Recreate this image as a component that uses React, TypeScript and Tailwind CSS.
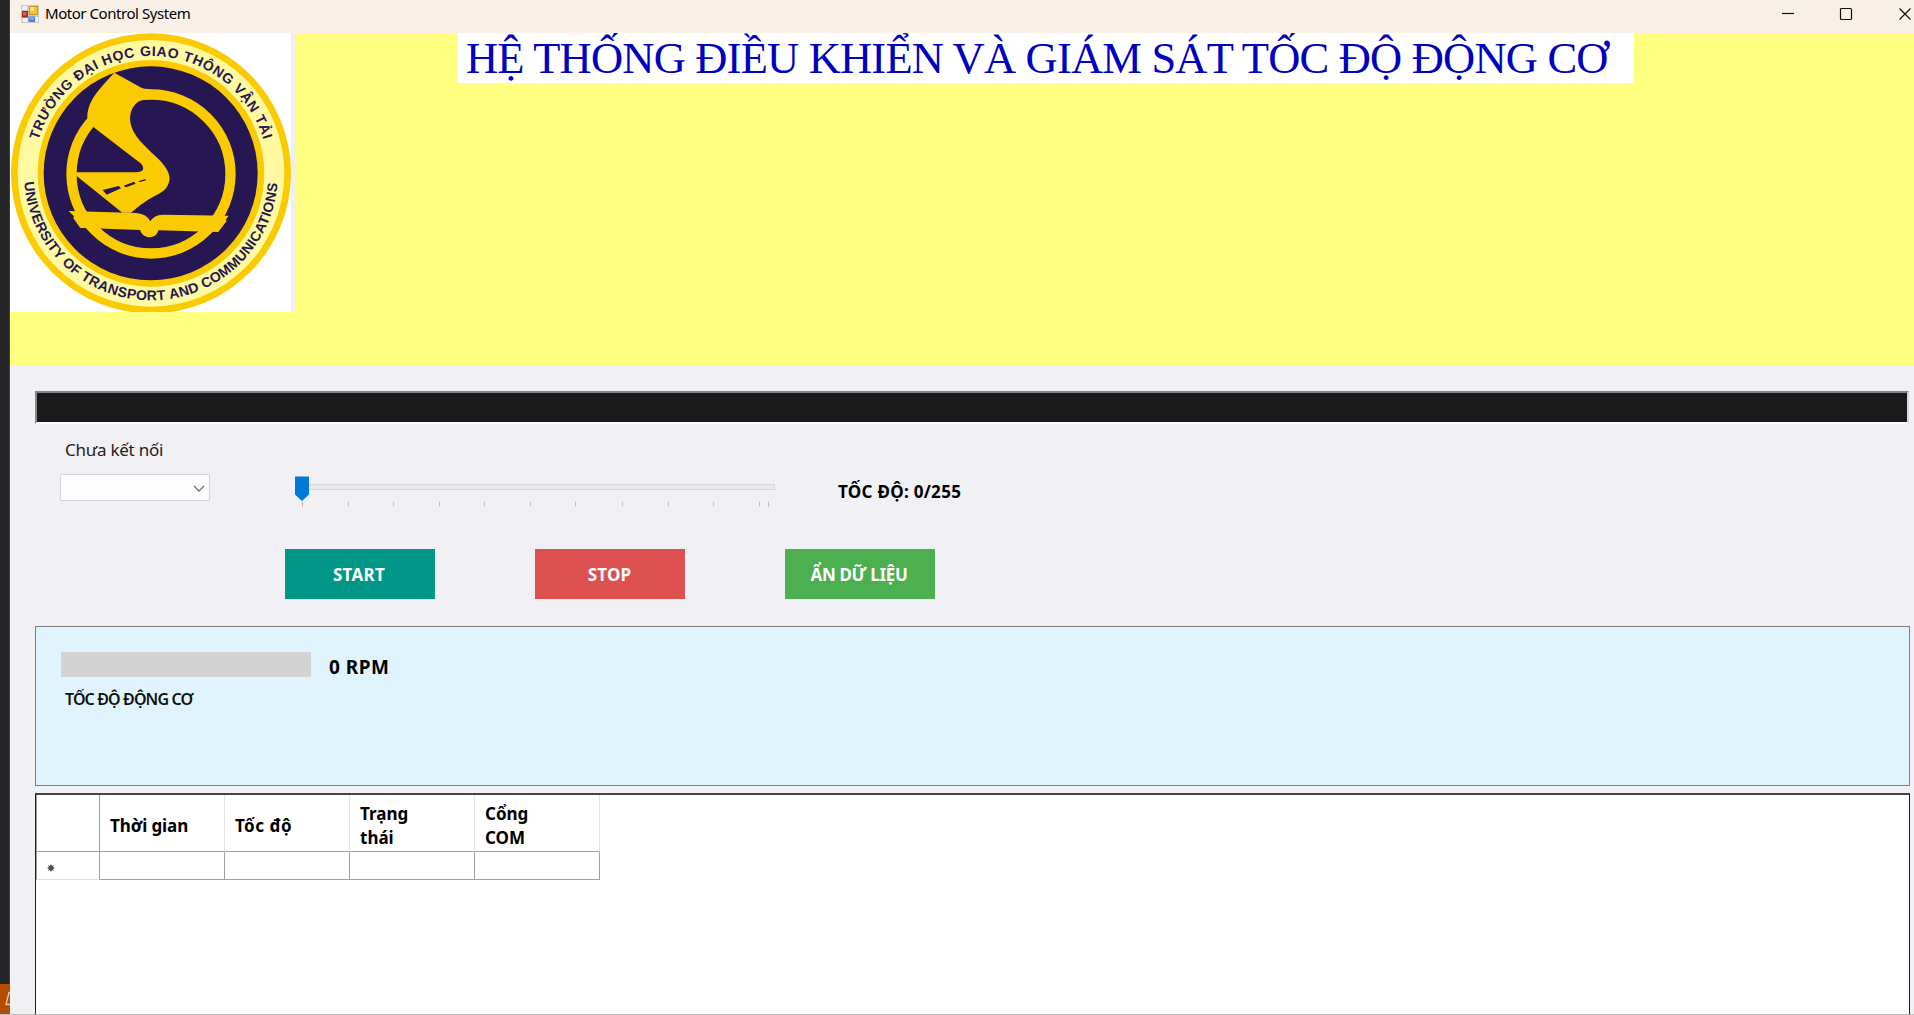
import React from "react";

function Logo() {
  return (
    <svg className="h-[279px] w-[281px] shrink-0 bg-white" viewBox="30 99 843 837">
      <circle cx="453" cy="520" r="420" fill="#fbcb02" />
      <circle cx="453" cy="520" r="400" fill="#fffaa2" />
      <circle cx="453" cy="520" r="340" fill="#fbcb02" />
      <circle cx="452" cy="520" r="321" fill="#261652" />
      <circle cx="453" cy="522" r="238.500" fill="none" stroke="#fbcb02" strokeWidth="31" />
      <path
        d="M343 218 L424 263 Q434 268 450 267 L452 298 L430 299 C405 304 386 332 391 366 C397 408 435 438 470 472 C505 505 513 530 507 547 C499 576 474 582 448 597 Q420 614 393 638 L367 638 L229 527 L229 517 L408 517 C430 517 436 505 422 490 L400 473 L280 381 L262 353 C262 305 292 272 343 218Z"
        fill="#fbcb02"
      />
      <path
        d="M308 570 L356 558 L363 565 L320 584Z M371 557 L402 545 L407 551 L378 562Z M415 544 L436 537 L438 541 L420 546Z"
        fill="#261652"
      />
      <path
        d="M206 633 L410 639 Q440 642 451 664 Q462 645 488 644 L686 647 L677 660 L680 663 L655 696 L475 691 C470 718 430 720 420 690 L260 684 L241 684 L220 655 L222 649Z"
        fill="#fbcb02"
      />
      <path id="arc-top" d="M101 520 A352 352 0 0 1 805 520" fill="none" />
      <path id="arc-bottom" d="M72 520 A381 381 0 0 0 834 520" fill="none" />
      <g fontFamily="Liberation Sans, sans-serif" fontWeight="700" fontSize="42" fill="#261652">
        <text letterSpacing="1.9">
          <textPath href="#arc-top" startOffset="101">TRƯỜNG ĐẠI HỌC GIAO THÔNG VẬN TẢI</textPath>
        </text>
        <text letterSpacing="1">
          <textPath href="#arc-bottom" startOffset="26">UNIVERSITY OF TRANSPORT AND COMMUNICATIONS</textPath>
        </text>
      </g>
    </svg>
  );
}

function AppIcon() {
  return (
    <svg className="h-[18px] w-[18px]" viewBox="0 0 18 18">
      <rect width="18" height="18" fill="#cbcac8" />
      <rect x="1.500" y="1" width="4.500" height="4" fill="#f3f2ef" />
      <rect x="1.500" y="13" width="5" height="4" fill="#f3f2ef" />
      <rect x="14.500" y="12" width="2.500" height="5" fill="#f3f2ef" />
      <rect x="8" y="1" width="9" height="9" fill="#c99a1d" />
      <rect x="9" y="2" width="7" height="7" fill="#f5c62c" />
      <rect x="9" y="2" width="4" height="4" fill="#fbe07b" />
      <rect x="1" y="6" width="6" height="6.500" fill="#a92318" />
      <rect x="2" y="7" width="3.500" height="3.500" fill="#d4675b" />
      <rect x="7.500" y="11.500" width="6.500" height="5.500" fill="#4a7fe0" />
      <rect x="8.500" y="12.500" width="4.500" height="2" fill="#8ab8fa" />
    </svg>
  );
}

function TitleBar() {
  return (
    <header className="flex h-[33px] items-center justify-between rounded-tl-sm bg-[#f9f1e7] pl-[11px] pr-[2px]">
      <div className="flex items-start gap-[6px] pb-[6px]">
        <AppIcon />
        <span className="-mt-px text-[15px] leading-[18px] tracking-[-0.45px] text-black">Motor Control System</span>
      </div>
      <div className="flex items-center gap-[45px] pb-[5px]">
        <svg className="h-[14px] w-[14px]" viewBox="0 0 14 14" fill="none" stroke="#111">
          <path d="M2 6.500H14" strokeWidth="1.200" />
        </svg>
        <svg className="h-[14px] w-[14px]" viewBox="0 0 14 14" fill="none" stroke="#111" strokeWidth="1.200">
          <rect x="1.500" y="1.500" width="11" height="11" rx="1" />
        </svg>
        <svg className="h-[14px] w-[14px]" viewBox="0 0 14 14" fill="none" stroke="#111" strokeWidth="1.200">
          <path d="M1.500 1.500L12.500 12.500M12.500 1.500L1.500 12.500" />
        </svg>
      </div>
    </header>
  );
}

const ticks = [7, 53, 98, 144, 189, 235, 280, 327, 373, 418, 464, 473];

function SpeedSlider() {
  return (
    <svg className="h-[34px] w-[480px]" viewBox="0 0 480 34">
      <rect x="0.500" y="9.500" width="479" height="5" fill="#e7eaea" stroke="#d6d8d9" />
      {ticks.map((x, i) => (
        <rect key={x} x={x} y="27" width="1" height={i === 0 || i === 11 ? 5 : 4} fill="#bfc0c4" />
      ))}
      <path d="M0 1.500H14V19.500L7 26L0 19.500Z" fill="#0078d7" />
    </svg>
  );
}

const headers = ["Thời gian", "Tốc độ", "Trạng thái", "Cổng COM"];

function DataGrid() {
  return (
    <section className="mr-1 mt-[7px] h-[221px] border-x border-t-2 border-x-[#1d1d1d] border-t-[#444] bg-white">
      <div className="grid w-[564px] grid-cols-[64px_125px_125px_125px_125px]">
        <div className="h-[57px] border-b border-l border-r border-[#a0a0a0]" />
        {headers.map((h, i) => (
          <div
            key={h}
            className={
              "flex items-center border-b border-r border-b-[#a0a0a0] border-r-[#e3e3e3] pl-[10px] pt-[5px] text-[17px] font-bold leading-6 text-black " +
              (i === 0 ? "tracking-[-0.1px]" : i === 1 ? "tracking-[0.5px]" : "")
            }
          >
            <span className={i < 2 ? "whitespace-nowrap" : "w-[60px]"}>{h}</span>
          </div>
        ))}
        <div className="flex h-7 items-center border-b border-l border-r border-b-[#e3e3e3] border-l-[#a0a0a0] border-r-[#a0a0a0] pl-[10px] pt-1">
          <svg className="h-2 w-2" viewBox="0 0 8 8">
            <path d="M4 .5V7.500M.5 4H7.500M1.500 1.500L6.500 6.500M6.500 1.500L1.500 6.500" stroke="#555" strokeWidth="1" />
            <circle cx="4" cy="4" r="2.700" fill="#505050" />
          </svg>
        </div>
        {headers.map((h) => (
          <div key={h} className="border-b border-r border-[#a0a0a0]" />
        ))}
      </div>
    </section>
  );
}

export default function App() {
  return (
    <div className="flex h-[1015px] w-[1914px] overflow-hidden bg-[#f0f0f5] font-['Noto_Sans',sans-serif]">
      <aside className="flex w-[10px] shrink-0 flex-col justify-end border-r border-[#3d3d3f] bg-[#262628]">
        <div className="flex h-[31px] w-[10px] items-center justify-end border-b border-[#bdbdbd] bg-[#b54c00]">
          <svg className="h-4 w-[5px]" viewBox="0 0 5 16" fill="none" stroke="#e9cdb8" strokeWidth="1.300">
            <path d="M5 1.500H4L1 13.500H5" />
          </svg>
        </div>
      </aside>
      <main className="flex min-w-0 flex-1 flex-col">
        <TitleBar />
        <div className="flex h-[332px] items-start bg-[#ffff80]">
          <Logo />
          <div className="h-[279px] w-[5px] bg-[#f0f0f4]" />
          <h1 className="ml-[162px] h-[50px] w-[1176px] overflow-hidden whitespace-nowrap bg-white pl-2 font-['Liberation_Serif',serif] text-[44.5px] leading-[50px] tracking-[-0.8px] text-[#0000c0]">
            HỆ THỐNG ĐIỀU KHIỂN VÀ GIÁM SÁT TỐC ĐỘ ĐỘNG CƠ
          </h1>
        </div>
        <div className="flex flex-1 flex-col pl-[25px]">
          <div className="mr-[5px] mt-[26px] h-[33px] border-2 border-b-[#fcfcfc] border-l-[#8a8a8a] border-r-[#d8d8d8] border-t-[#858585] bg-[#1a1a1a]" />
          <div className="flex h-[125px]">
            <div className="flex w-[225px] flex-col pl-[25px] pt-[14px]">
              <span className="pl-[5px] text-[17px] leading-6 tracking-[-0.25px] text-[#222]">Chưa kết nối</span>
              <div className="mt-3 flex h-[27px] w-[150px] items-center justify-end rounded-[2px] border border-[#d4d4d6] bg-[#fdfdfd] pr-[4px]">
                <svg className="h-3 w-3" viewBox="0 0 12 12" fill="none" stroke="#707070" strokeWidth="1.300">
                  <path d="M1 4L6 9L11 4" />
                </svg>
              </div>
            </div>
            <div className="flex items-start pl-[35px] pt-[51px]">
              <SpeedSlider />
              <span className="ml-[63px] mt-[5px] text-[17px] font-bold leading-6 tracking-[0.3px] text-black">
                TỐC ĐỘ: 0/255
              </span>
            </div>
          </div>
          <div className="flex gap-[100px] pl-[250px] text-[17px] font-bold leading-6 text-white">
            <button className="h-[50px] w-[150px] bg-[#009688] pr-[2px] pt-px tracking-[0.3px]">START</button>
            <button className="h-[50px] w-[150px] bg-[#dc5050] pr-[1px] pt-px tracking-[0.2px]">STOP</button>
            <button className="h-[50px] w-[150px] bg-[#4caf50] pr-[2px] pt-px tracking-[-0.35px]">ẨN DỮ LIỆU</button>
          </div>
          <section className="mr-1 mt-[27px] h-[160px] border border-[#7d8083] bg-[#e0f4fe] pl-[25px] pt-[25px]">
            <div className="flex h-[25px] items-center">
              <div className="h-[25px] w-[250px] bg-[#d3d3d3]" />
              <span className="ml-[18px] mt-[5px] text-[19px] font-bold leading-6 tracking-[0.5px] text-black">0 RPM</span>
            </div>
            <div className="ml-[4px] mt-[10px] text-[16px] font-semibold leading-6 tracking-[-0.88px] text-[#111]">
              TỐC ĐỘ ĐỘNG CƠ
            </div>
          </section>
          <DataGrid />
          <div className="-ml-[25px] h-px bg-[#bdbdbd]" />
        </div>
      </main>
    </div>
  );
}
